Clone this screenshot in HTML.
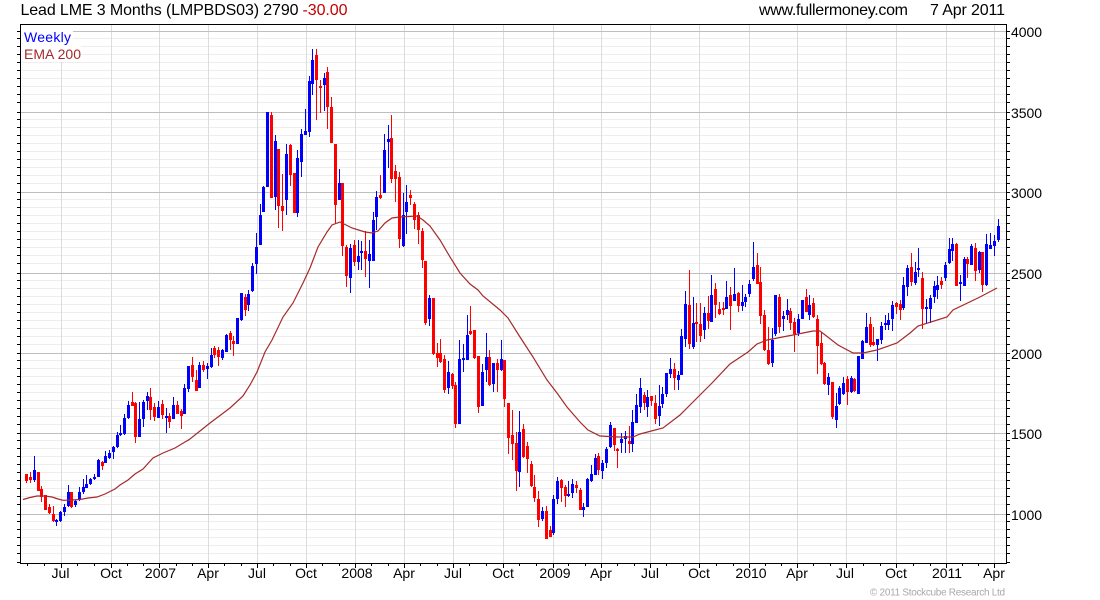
<!DOCTYPE html>
<html><head><meta charset="utf-8"><title>Lead LME 3 Months</title>
<style>html,body{margin:0;padding:0;background:#fff;width:1100px;height:600px;overflow:hidden}svg{display:block}text{font-family:"Liberation Sans",Arial,sans-serif}</style></head><body>
<svg width="1100" height="600" viewBox="0 0 1100 600" xmlns="http://www.w3.org/2000/svg">
<rect width="1100" height="600" fill="#fff"/>
<g fill="none" shape-rendering="crispEdges">
<path stroke="#ededed" d="M21 38.5H1006M21 46.5H1006M21 54.5H1006M21 62.5H1006M21 70.5H1006M21 78.5H1006M21 86.5H1006M21 94.5H1006M21 102.5H1006M21 119.5H1006M21 127.5H1006M21 135.5H1006M21 143.5H1006M21 151.5H1006M21 159.5H1006M21 167.5H1006M21 175.5H1006M21 183.5H1006M21 199.5H1006M21 207.5H1006M21 215.5H1006M21 223.5H1006M21 231.5H1006M21 239.5H1006M21 247.5H1006M21 255.5H1006M21 263.5H1006M21 280.5H1006M21 288.5H1006M21 296.5H1006M21 304.5H1006M21 312.5H1006M21 320.5H1006M21 328.5H1006M21 336.5H1006M21 344.5H1006M21 360.5H1006M21 368.5H1006M21 376.5H1006M21 384.5H1006M21 392.5H1006M21 400.5H1006M21 408.5H1006M21 416.5H1006M21 424.5H1006M21 440.5H1006M21 448.5H1006M21 456.5H1006M21 464.5H1006M21 472.5H1006M21 480.5H1006M21 488.5H1006M21 496.5H1006M21 504.5H1006M21 521.5H1006M21 529.5H1006M21 537.5H1006M21 545.5H1006M21 553.5H1006"/>
<path stroke="#dcdcdc" d="M61.5 25V563M111.5 25V563M159.5 25V563M208.5 25V563M257.5 25V563M306.5 25V563M355.5 25V563M404.5 25V563M453.5 25V563M503.5 25V563M553.5 25V563M601.5 25V563M650.5 25V563M699.5 25V563M749.5 25V563M797.5 25V563M846.5 25V563M896.5 25V563M946.5 25V563M994.5 25V563"/>
<path stroke="#bebebe" d="M21 31.5H1006M21 112.5H1006M21 192.5H1006M21 273.5H1006M21 353.5H1006M21 433.5H1006M21 514.5H1006"/>
<rect x="21" y="25" width="52" height="20" fill="#fff"/>
<rect x="21" y="45" width="60" height="17" fill="#fff"/>
<path stroke="#0000ff" d="M34.5 456V482M56.5 519V526M60.5 511V522M64.5 504V516M68.5 485V507M75.5 500V507M79.5 487V501M83.5 479V494M86.5 475V488M90.5 478V485M94.5 474V480M98.5 459V477M105.5 451V463M109.5 450V459M113.5 446V459M117.5 432V448M120.5 425V436M124.5 414V435M128.5 401V419M139.5 402V437M143.5 400V427M147.5 392V410M158.5 401V418M166.5 408V433M173.5 397V419M184.5 384V414M188.5 366V392M199.5 362V388M207.5 363V379M211.5 348V368M222.5 349V360M226.5 334V352M237.5 318V344M241.5 293V321M248.5 290V311M252.5 263V292M256.5 233V274M260.5 204V245M263.5 186V212M267.5 112V187M275.5 135V210M286.5 144V215M297.5 150V217M301.5 129V177M305.5 109V135M309.5 76V137M312.5 49V95M324.5 73V111M339.5 169V200M350.5 244V293M358.5 240V270M361.5 241V270M369.5 240V288M373.5 212V261M376.5 191V230M384.5 134V193M388.5 125V168M403.5 193V247M406.5 185V234M429.5 295V326M448.5 361V394M459.5 340V424M463.5 344V372M467.5 315V360M482.5 364V406M486.5 333V382M493.5 363V392M501.5 340V371M519.5 411V487M542.5 507V521M553.5 495V535M557.5 477V504M568.5 481V497M572.5 479V498M583.5 503V517M587.5 478V507M591.5 465V482M595.5 454V475M602.5 460V479M606.5 447V468M610.5 422V448M621.5 433V453M625.5 431V453M632.5 410V452M636.5 394V423M640.5 378V413M647.5 390V417M659.5 385V426M662.5 387V408M666.5 373V397M670.5 358V378M678.5 371V390M681.5 329V375M685.5 291V347M693.5 297V349M704.5 307V339M711.5 275V322M726.5 281V309M734.5 268V301M742.5 285V311M745.5 294V307M749.5 280V297M753.5 242V281M772.5 328V367M775.5 295V336M783.5 311V331M787.5 299V320M798.5 314V336M802.5 300V319M809.5 295V320M828.5 373V395M836.5 393V428M839.5 386V405M843.5 377V395M851.5 376V393M858.5 356V394M862.5 340V359M866.5 313V343M877.5 339V361M881.5 322V344M885.5 315V330M888.5 313V330M892.5 301V331M903.5 277V310M907.5 265V296M915.5 262V285M918.5 248V277M926.5 299V324M930.5 295V323M934.5 281V303M937.5 276V299M945.5 262V281M949.5 238V264M952.5 238V261M960.5 275V301M964.5 257V286M971.5 244V265M979.5 251V273M986.5 234V286M990.5 233V249M994.5 235V256M998.5 219V242"/>
<path stroke="#0000ff" stroke-width="3" d="M34.5 470V480M56.5 520V522M60.5 512V521M64.5 507V512M68.5 492V506M75.5 501V505M79.5 492V500M83.5 487V492M86.5 484V488M90.5 479V484M94.5 477V479M98.5 460V477M105.5 456V463M109.5 453V458M113.5 447V452M117.5 435V447M120.5 433V435M124.5 418V434M128.5 405V418M139.5 419V437M143.5 402V419M147.5 396V401M158.5 407V418M166.5 416V418M173.5 405V419M184.5 388V414M188.5 366V389M199.5 365V388M207.5 366V369M211.5 355V367M222.5 350V358M226.5 335V352M237.5 318V344M241.5 293V320M248.5 294V305M252.5 266V291M256.5 247V264M260.5 215V245M263.5 187V212M267.5 112V187M275.5 141V197M286.5 154V200M297.5 158V213M301.5 134V162M305.5 131V135M309.5 81V132M312.5 60V84M324.5 78V85M339.5 183V200M350.5 248V278M358.5 256V262M361.5 251V253M369.5 254V261M373.5 220V261M376.5 197V217M384.5 150V193M388.5 139V142M403.5 215V246M406.5 202V212M429.5 298V319M448.5 372V388M459.5 359V424M463.5 358V360M467.5 335V360M482.5 372V406M486.5 357V370M493.5 363V384M501.5 359V370M519.5 432V472M542.5 511V519M553.5 499V533M557.5 481V499M568.5 494V496M572.5 484V493M583.5 507V510M587.5 479V507M591.5 474V481M595.5 458V475M602.5 463V471M606.5 449V463M610.5 425V447M621.5 439V443M625.5 436V439M632.5 422V444M636.5 405V423M640.5 388V407M647.5 397V407M659.5 406V416M662.5 394V404M666.5 373V394M670.5 369V374M678.5 375V380M681.5 336V375M685.5 304V339M693.5 323V347M704.5 313V330M711.5 295V322M726.5 297V309M734.5 294V301M742.5 302V306M745.5 297V302M749.5 284V294M753.5 267V279M772.5 340V363M775.5 295V334M783.5 316V319M787.5 310V315M798.5 319V333M802.5 300V319M809.5 305V315M828.5 377V385M836.5 406V420M839.5 388V404M843.5 383V394M851.5 378V392M858.5 356V394M862.5 341V359M866.5 327V343M877.5 339V345M881.5 326V340M885.5 323V325M888.5 320V325M892.5 305V319M903.5 285V308M907.5 268V287M915.5 272V283M918.5 268V270M926.5 307V309M930.5 298V309M934.5 286V297M937.5 285V290M945.5 265V278M949.5 249V263M952.5 244V251M960.5 282V284M964.5 259V286M971.5 246V265M979.5 252V270M986.5 244V285M990.5 245V249M994.5 241V246M998.5 226V240"/>
<path stroke="#ff0000" d="M26.5 474V483M30.5 472V483M38.5 472V491M41.5 486V502M45.5 495V510M49.5 504V514M53.5 506V522M71.5 492V508M102.5 461V470M132.5 392V406M135.5 402V443M150.5 388V420M154.5 403V421M162.5 400V419M169.5 413V428M177.5 401V414M181.5 409V429M192.5 357V382M196.5 370V391M203.5 361V372M214.5 346V358M218.5 347V366M230.5 331V350M233.5 336V356M245.5 294V316M271.5 112V198M278.5 149V228M282.5 174V231M290.5 144V186M294.5 173V213M316.5 49V120M320.5 80V113M327.5 67V129M331.5 97V143M335.5 144V224M342.5 183V256M346.5 245V287M354.5 240V266M365.5 231V277M380.5 175V199M391.5 115V183M395.5 165V202M399.5 172V248M410.5 190V205M414.5 202V229M418.5 212V244M422.5 228V268M425.5 261V325M433.5 298V355M437.5 343V367M440.5 339V363M444.5 355V393M452.5 373V389M455.5 382V428M470.5 306V335M474.5 330V359M478.5 356V413M489.5 350V386M497.5 359V392M504.5 360V407M508.5 403V454M512.5 410V460M516.5 432V491M523.5 424V458M527.5 442V473M531.5 461V487M534.5 475V502M538.5 491V527M546.5 506V539M550.5 526V537M561.5 479V502M565.5 485V507M576.5 481V493M580.5 488V510M598.5 453V475M614.5 428V451M617.5 448V468M629.5 426V453M644.5 392V410M651.5 396V406M655.5 395V424M674.5 363V390M689.5 270V349M696.5 303V342M700.5 303V342M708.5 296V329M715.5 283V318M719.5 302V315M723.5 302V315M730.5 287V330M738.5 292V312M757.5 253V284M760.5 267V324M764.5 310V351M768.5 327V365M779.5 294V333M790.5 308V330M794.5 318V352M806.5 289V312M813.5 298V318M817.5 315V374M821.5 332V365M824.5 362V385M832.5 382V419M847.5 376V405M854.5 378V392M870.5 317V347M873.5 327V346M896.5 302V314M900.5 300V320M911.5 253V286M922.5 272V329M941.5 277V289M956.5 243V286M967.5 257V278M975.5 243V281M982.5 252V292"/>
<path stroke="#ff0000" stroke-width="3" d="M26.5 474V481M30.5 477V480M38.5 472V491M41.5 489V497M45.5 495V510M49.5 507V513M53.5 514V521M71.5 492V507M102.5 462V466M132.5 402V406M135.5 403V437M150.5 397V410M154.5 407V417M162.5 404V415M169.5 416V422M177.5 405V414M181.5 411V416M192.5 365V377M196.5 380V391M203.5 365V370M214.5 348V355M218.5 350V357M230.5 333V340M233.5 341V344M245.5 297V310M271.5 115V198M278.5 149V206M282.5 206V211M290.5 145V175M294.5 173V213M316.5 55V80M320.5 86V88M327.5 72V107M331.5 107V143M335.5 144V205M342.5 183V246M346.5 247V276M354.5 245V262M365.5 251V259M380.5 195V198M391.5 138V179M395.5 171V179M399.5 177V239M410.5 195V198M414.5 204V220M418.5 215V230M422.5 231V260M425.5 261V323M433.5 298V354M437.5 353V358M440.5 353V362M444.5 359V390M452.5 374V386M455.5 385V424M470.5 331V334M474.5 330V358M478.5 356V407M489.5 357V385M497.5 363V370M504.5 360V399M508.5 403V438M512.5 435V444M516.5 443V471M523.5 429V457M527.5 446V459M531.5 464V486M534.5 487V498M538.5 499V520M546.5 511V539M550.5 530V537M561.5 480V488M565.5 487V496M576.5 485V488M580.5 490V510M598.5 456V470M614.5 428V445M617.5 449V451M629.5 441V444M644.5 395V403M651.5 396V401M655.5 403V419M674.5 369V378M689.5 305V344M696.5 322V324M700.5 324V336M708.5 313V321M715.5 289V305M719.5 309V314M723.5 308V310M730.5 295V306M738.5 293V306M757.5 265V284M760.5 282V316M764.5 315V350M768.5 350V364M779.5 297V327M790.5 311V323M794.5 322V334M806.5 297V312M813.5 303V317M817.5 319V346M821.5 343V364M824.5 363V384M832.5 382V417M847.5 379V392M854.5 379V391M870.5 324V345M873.5 342V345M896.5 303V307M900.5 304V310M911.5 267V282M922.5 278V309M941.5 281V285M956.5 244V286M967.5 259V264M975.5 248V271M982.5 252V285"/>
<path stroke="#000" d="M20.5 24V564M1006.5 24V564M20 24.5H1007M20 563.5H1007M17 31.5H20M17 38.5H20M17 46.5H20M17 54.5H20M17 62.5H20M17 70.5H20M17 78.5H20M17 86.5H20M17 94.5H20M17 102.5H20M17 112.5H20M17 119.5H20M17 127.5H20M17 135.5H20M17 143.5H20M17 151.5H20M17 159.5H20M17 167.5H20M17 175.5H20M17 183.5H20M17 192.5H20M17 199.5H20M17 207.5H20M17 215.5H20M17 223.5H20M17 231.5H20M17 239.5H20M17 247.5H20M17 255.5H20M17 263.5H20M17 273.5H20M17 280.5H20M17 288.5H20M17 296.5H20M17 304.5H20M17 312.5H20M17 320.5H20M17 328.5H20M17 336.5H20M17 344.5H20M17 353.5H20M17 360.5H20M17 368.5H20M17 376.5H20M17 384.5H20M17 392.5H20M17 400.5H20M17 408.5H20M17 416.5H20M17 424.5H20M17 433.5H20M17 440.5H20M17 448.5H20M17 456.5H20M17 464.5H20M17 472.5H20M17 480.5H20M17 488.5H20M17 496.5H20M17 504.5H20M17 514.5H20M17 521.5H20M17 529.5H20M17 537.5H20M17 545.5H20M17 553.5H20M17 562.5H20M1007 31.5H1010M1007 38.5H1010M1007 46.5H1010M1007 54.5H1010M1007 62.5H1010M1007 70.5H1010M1007 78.5H1010M1007 86.5H1010M1007 94.5H1010M1007 102.5H1010M1007 112.5H1010M1007 119.5H1010M1007 127.5H1010M1007 135.5H1010M1007 143.5H1010M1007 151.5H1010M1007 159.5H1010M1007 167.5H1010M1007 175.5H1010M1007 183.5H1010M1007 192.5H1010M1007 199.5H1010M1007 207.5H1010M1007 215.5H1010M1007 223.5H1010M1007 231.5H1010M1007 239.5H1010M1007 247.5H1010M1007 255.5H1010M1007 263.5H1010M1007 273.5H1010M1007 280.5H1010M1007 288.5H1010M1007 296.5H1010M1007 304.5H1010M1007 312.5H1010M1007 320.5H1010M1007 328.5H1010M1007 336.5H1010M1007 344.5H1010M1007 353.5H1010M1007 360.5H1010M1007 368.5H1010M1007 376.5H1010M1007 384.5H1010M1007 392.5H1010M1007 400.5H1010M1007 408.5H1010M1007 416.5H1010M1007 424.5H1010M1007 433.5H1010M1007 440.5H1010M1007 448.5H1010M1007 456.5H1010M1007 464.5H1010M1007 472.5H1010M1007 480.5H1010M1007 488.5H1010M1007 496.5H1010M1007 504.5H1010M1007 514.5H1010M1007 521.5H1010M1007 529.5H1010M1007 537.5H1010M1007 545.5H1010M1007 553.5H1010M1007 562.5H1010M61.5 564V568M111.5 564V568M159.5 564V568M208.5 564V568M257.5 564V568M306.5 564V568M355.5 564V568M404.5 564V568M453.5 564V568M503.5 564V568M553.5 564V568M601.5 564V568M650.5 564V568M699.5 564V568M749.5 564V568M797.5 564V568M846.5 564V568M896.5 564V568M946.5 564V568M994.5 564V568M27.5 564V566M44.5 564V566M77.5 564V566M94.5 564V566M127.5 564V566M143.5 564V566M176.5 564V566M192.5 564V566M224.5 564V566M241.5 564V566M273.5 564V566M290.5 564V566M322.5 564V566M339.5 564V566M371.5 564V566M388.5 564V566M420.5 564V566M437.5 564V566M469.5 564V566M486.5 564V566M519.5 564V566M536.5 564V566M568.5 564V566M585.5 564V566M617.5 564V566M634.5 564V566M666.5 564V566M683.5 564V566M716.5 564V566M733.5 564V566M765.5 564V566M781.5 564V566M813.5 564V566M830.5 564V566M863.5 564V566M880.5 564V566M913.5 564V566M930.5 564V566M962.5 564V566M978.5 564V566"/>
</g>
<polyline fill="none" stroke="#a52a2a" stroke-width="1.2" points="23,499.5 30,497.5 37,496 45,496 52,497 58,499 63,500.3 72,500 80,499.5 88,498 97,497 105,494 115,489 120,485 128,480 135,474 143,469 153,458 163,453 175,448 185,442 189,439.7 200,431 210,423 230,408 243,396 250,385 257,372 265,352 272,340 283,317 293,303 303,283 310,268 318,247 327,232 332,225 340,222 352,228 365,232 372,233 378,231 385,223 392,218 400,217 417,216 423,220 430,226 440,240 450,257 460,273 470,284 478,290 483,296 500,310 508,318 520,337 533,357 547,380 557,393 567,407 580,422 588,430 600,436 618,437 633,437 640,434 663,428 680,415 695,400 705,390 712,383 730,364 748,352 757,344 767,340 793,335 813,331 820,331 838,345 853,353 863,353 877,350 897,343 910,333 918,326 947,317 953,310 980,297 997,288"/>
<text x="20.5" y="15" font-size="16" fill="#000" textLength="278" lengthAdjust="spacing">Lead LME 3 Months (LMPBDS03) 2790</text>
<text x="302.5" y="15" font-size="16" fill="#c40000" textLength="45" lengthAdjust="spacing">-30.00</text>
<text x="759" y="15" font-size="16" fill="#000" textLength="149" lengthAdjust="spacing">www.fullermoney.com</text>
<text x="930" y="15" font-size="16" fill="#000" textLength="75" lengthAdjust="spacing">7 Apr 2011</text>
<text x="24" y="42" font-size="14" fill="#0000ff" textLength="47" lengthAdjust="spacing">Weekly</text>
<text x="24" y="59" font-size="14" fill="#a52a2a" textLength="57" lengthAdjust="spacing">EMA 200</text>
<g font-size="14" fill="#000">
<text x="1011" y="37" textLength="31">4000</text>
<text x="1011" y="118" textLength="31">3500</text>
<text x="1011" y="198" textLength="31">3000</text>
<text x="1011" y="279" textLength="31">2500</text>
<text x="1011" y="359" textLength="31">2000</text>
<text x="1011" y="439" textLength="31">1500</text>
<text x="1011" y="520" textLength="31">1000</text>
</g>
<g font-size="14" fill="#000" text-anchor="middle">
<text x="60.5" y="578">Jul</text><text x="111" y="578">Oct</text><text x="160.5" y="578">2007</text><text x="208" y="578">Apr</text><text x="257" y="578">Jul</text><text x="306" y="578">Oct</text><text x="357" y="578">2008</text><text x="404" y="578">Apr</text><text x="453" y="578">Jul</text><text x="503" y="578">Oct</text><text x="555" y="578">2009</text><text x="601" y="578">Apr</text><text x="650" y="578">Jul</text><text x="699" y="578">Oct</text><text x="751" y="578">2010</text><text x="797" y="578">Apr</text><text x="845" y="578">Jul</text><text x="896" y="578">Oct</text><text x="947" y="578">2011</text><text x="994" y="578">Apr</text>
</g>
<text x="870" y="595.5" font-size="10" fill="#a8a8a8" textLength="135" lengthAdjust="spacing">© 2011 Stockcube Research Ltd</text>
</svg>
</body></html>
